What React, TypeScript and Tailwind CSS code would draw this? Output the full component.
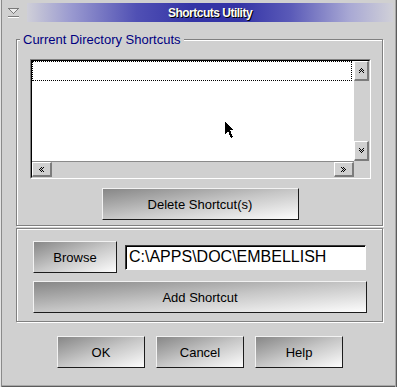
import { FC } from "react";

const UP: number[][] = [[3, 0], [2, 1], [4, 1], [1, 2], [3, 2], [5, 2], [2, 3], [4, 3], [1, 4], [5, 4]];

const Glyph: FC<{ dir: "up" | "down" | "left" | "right" }> = ({ dir }) => {
    const vertical = dir === "up" || dir === "down";
    const pts = UP.map(([x, y]) => {
        if (dir === "up") return [x, y];
        if (dir === "down") return [x, 4 - y];
        if (dir === "left") return [y, x];
        return [4 - y, x];
    });
    return (
        <svg width={vertical ? 7 : 5} height={vertical ? 5 : 7} shapeRendering="crispEdges">
            {pts.map(([x, y], i) => (
                <rect key={i} x={x} y={y} width={1} height={1} fill="#000" />
            ))}
        </svg>
    );
};

const ScrollBtn: FC<{ dir: "up" | "down" | "left" | "right"; className: string }> = ({ dir, className }) => (
    <div className={"flex items-center justify-center bg-[#d0d0d0] border-t border-l border-t-white border-l-white border-b-2 border-r-2 border-b-[#7c7c7c] border-r-[#7c7c7c] " + className}>
        <Glyph dir={dir} />
    </div>
);

const Btn: FC<{ label: string; className?: string }> = ({ label, className }) => (
    <button
        type="button"
        className={"flex items-center justify-center h-[32px] border border-t-[#f2f2f2] border-l-[#f2f2f2] border-b-[#1c1c1c] border-r-[#1c1c1c] bg-linear-to-br from-[#878787] via-[#c6c6c6] to-[#fdfdfd] text-[13px] text-black leading-none " + (className ?? "")}
    >
        {label}
    </button>
);

const App: FC = () => {
    return (
        <div className="w-[397px] h-[387px] bg-[#d0d0d0] font-['Liberation_Sans',Arial,sans-serif] flex flex-col shadow-[inset_1px_0_0_#e4e4e4,inset_2px_0_0_#8a8a8a,inset_-1px_0_0_#5c5c5c,inset_-2px_0_0_#a8a8a8,inset_0_-1px_0_#5c5c5c,inset_0_-2px_0_#a8a8a8]">
            {/* title bar */}
            <div className="flex h-[19px] mt-[3px] mr-[4px]">
                <div className="w-[27px] flex items-center justify-center">
                    <svg width="11" height="10" shapeRendering="crispEdges">
                        <polygon points="0.5,0.5 10.5,0.5 5.5,5.5" fill="#ececec" stroke="#7a7a7a" />
                        <line x1="0" y1="8.5" x2="11" y2="8.5" stroke="#7a7a7a" />
                        <line x1="0" y1="9.5" x2="11" y2="9.5" stroke="#ffffff" />
                    </svg>
                </div>
                <div className="flex-1 flex items-center justify-center bg-[linear-gradient(90deg,#cfcfd8_0%,#9a9ad0_12%,#5050b4_30%,#3434a6_45%,#3434a6_58%,#5a5ab8_72%,#a8a8d4_88%,#d0d0d8_100%)]">
                    <span className="text-[12px] font-bold tracking-[-0.5px] text-[#fffff0] [text-shadow:1px_1px_0_#000] leading-none">
                        Shortcuts Utility
                    </span>
                </div>
            </div>

            {/* current directory group */}
            <div className="ml-[16px] mt-[17px] w-[367px] h-[187px] border border-[#808080] shadow-[inset_1px_1px_0_#fff,1px_1px_0_#fff] flex flex-col pl-[13px] pr-[12px]">
                <span className="-mt-[8px] -ml-[10px] px-[3px] self-start bg-[#d0d0d0] text-[13px] leading-[15px] text-[#000080]">
                    Current Directory Shortcuts
                </span>
                <div className="mt-[12px] w-[341px] h-[120px] border border-t-[#808080] border-l-[#808080] border-b-white border-r-white">
                    <div className="w-full h-full border border-t-black border-l-black border-b-[#d0d0d0] border-r-[#d0d0d0] grid grid-cols-[1fr_15px] grid-rows-[1fr_16px]">
                        <div className="relative bg-white">
                            <div className="h-[20px] mr-[2px] border border-dotted border-black" />
                            <svg className="absolute left-[193px] top-[61px]" width="10" height="17" shapeRendering="crispEdges">
                                <path d="M0 0 L0 12 L3 9 L6 16 L8 15 L5 8 L9 8 Z" fill="#000" />
                            </svg>
                        </div>
                        <div className="flex flex-col justify-between bg-[#d0d0d0]">
                            <ScrollBtn dir="up" className="h-[20px]" />
                            <ScrollBtn dir="down" className="h-[20px]" />
                        </div>
                        <div className="flex justify-between bg-[#d0d0d0] border-t border-t-[#8a8a8a]">
                            <ScrollBtn dir="left" className="w-[20px]" />
                            <ScrollBtn dir="right" className="w-[20px]" />
                        </div>
                        <div className="bg-[#d0d0d0]" />
                    </div>
                </div>
                <Btn label="Delete Shortcut(s)" className="mt-[9px] w-[197px] self-center" />
            </div>

            {/* browse group */}
            <div className="ml-[16px] mt-[2px] w-[367px] h-[94px] border border-[#808080] shadow-[inset_1px_1px_0_#fff,1px_1px_0_#fff] flex flex-col pl-[16px] pr-[15px] pt-[12px]">
                <div className="flex items-center gap-[8px]">
                    <Btn label="Browse" className="w-[84px]" />
                    <div className="flex-1 mr-[1px] h-[25px] flex items-center pl-[3px] bg-white border border-t-[#3a3a3a] border-l-[#3a3a3a] border-b-white border-r-white shadow-[inset_1px_1px_0_#000] text-[16px] text-black">
                        C:\APPS\DOC\EMBELLISH
                    </div>
                </div>
                <Btn label="Add Shortcut" className="mt-[8px] w-full" />
            </div>

            {/* dialog buttons */}
            <div className="mt-[14px] flex justify-center gap-[11px] pl-[3px]">
                <Btn label="OK" className="w-[88px]" />
                <Btn label="Cancel" className="w-[88px]" />
                <Btn label="Help" className="w-[88px]" />
            </div>
        </div>
    );
};

export default App;
